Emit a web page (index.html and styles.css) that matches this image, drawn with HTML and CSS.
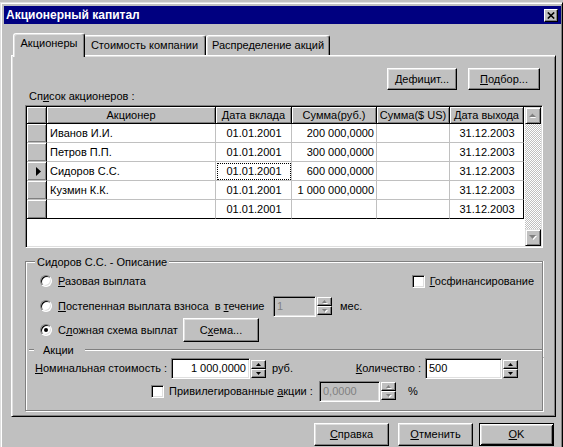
FILE: index.html
```html
<!DOCTYPE html>
<html lang="ru">
  <head>
    <meta charset="utf-8" />
    <title>Акционерный капитал</title>
    <link rel="stylesheet" href="styles.css">
  </head>

  <body>
    <div class="window">
      <div class="titlebar">
        <span class="title">Акционерный капитал</span>
        <span class="close-btn">
          <svg width="8" height="7" viewBox="0 0 8 7"><path d="M0.8 0.5L7.2 6.5M7.2 0.5L0.8 6.5" stroke="#000" stroke-width="1.6"/></svg>
        </span>
      </div>

      <div class="tabs">
        <div class="tab tab-1 active">Акционеры</div>
        <div class="tab tab-2">Стоимость компании</div>
        <div class="tab tab-3">Распределение акций</div>
      </div>

      <div class="tabpage">
        <div class="top-buttons">
          <button class="btn btn-deficit"><u>Д</u>ефицит...</button>
          <button class="btn btn-pick"><u>П</u>одбор...</button>
        </div>
        <div class="list-label">Сп<u>и</u>сок акционеров :</div>

        <!-- grid -->
        <div class="grid">
          <div class="grid-main">
            <table class="grid-table">
              <colgroup>
                <col class="c-ind"><col class="c-name"><col class="c-date"><col class="c-sum"><col class="c-usd"><col class="c-exit">
              </colgroup>
              <thead>
                <tr>
                  <th class="ind"></th>
                  <th>Акционер</th>
                  <th>Дата вклада</th>
                  <th>Сумма(руб.)</th>
                  <th>Сумма($ US)</th>
                  <th>Дата выхода</th>
                </tr>
              </thead>
              <tbody>
                <tr>
                  <td class="ind"></td>
                  <td>Иванов И.И.</td>
                  <td class="center">01.01.2001</td>
                  <td class="num">200 000,0000</td>
                  <td></td>
                  <td class="center">31.12.2003</td>
                </tr>
                <tr>
                  <td class="ind"></td>
                  <td>Петров П.П.</td>
                  <td class="center">01.01.2001</td>
                  <td class="num">300 000,0000</td>
                  <td></td>
                  <td class="center">31.12.2003</td>
                </tr>
                <tr>
                  <td class="ind current">
                    <svg width="5" height="9" viewBox="0 0 5 9"><path d="M0 0L5 4.5L0 9z" fill="#000"/></svg>
                  </td>
                  <td>Сидоров С.С.</td>
                  <td class="center focus">01.01.2001</td>
                  <td class="num">600 000,0000</td>
                  <td></td>
                  <td class="center">31.12.2003</td>
                </tr>
                <tr>
                  <td class="ind"></td>
                  <td>Кузмин К.К.</td>
                  <td class="center">01.01.2001</td>
                  <td class="num">1 000 000,0000</td>
                  <td></td>
                  <td class="center">31.12.2003</td>
                </tr>
                <tr>
                  <td class="ind"></td>
                  <td></td>
                  <td class="center">01.01.2001</td>
                  <td class="num"></td>
                  <td></td>
                  <td class="center">31.12.2003</td>
                </tr>
              </tbody>
            </table>
          </div>
          <div class="vscroll">
            <div class="sb-btn">
              <svg width="8" height="5" viewBox="0 0 8 5"><path d="M1 5L4 1L7 5z" fill="#fff"/><path d="M0 4L3.5 0.5L7 4z" fill="#808080"/></svg>
            </div>
            <div class="sb-track"></div>
            <div class="sb-btn">
              <svg width="8" height="5" viewBox="0 0 8 5"><path d="M1 1H8L4.5 5z" fill="#fff"/><path d="M0 0H7L3.5 4z" fill="#808080"/></svg>
            </div>
          </div>
        </div>

        <!-- description -->
        <div class="group desc">
          <div class="group-title"><span>Сидоров С.С. - Описание</span></div>
          <div class="group-body desc-body">
            <div class="opt-row row-1">
              <label class="radio-label"><span class="radio"></span><span><u>Р</u>азовая выплата</span></label>
              <label class="check-label gosfin"><span class="checkbox"></span><span><u>Г</u>осфинансирование</span></label>
            </div>
            <div class="opt-row row-2">
              <label class="radio-label term-label"><span class="radio"></span><span><u>П</u>остепенная выплата взноса&nbsp; в <u>т</u>ечение</span></label>
              <div class="spin w-term">
                <span class="field disabled">1</span>
                <span class="spinner disabled">
                  <span class="spin-btn"><svg width="5" height="3" viewBox="0 0 5 3"><path d="M2.5 0L5 3H0z"/></svg></span>
                  <span class="spin-btn"><svg width="5" height="3" viewBox="0 0 5 3"><path d="M0 0H5L2.5 3z"/></svg></span>
                </span>
              </div>
              <span class="unit unit-month">мес.</span>
            </div>
            <div class="opt-row row-3">
              <label class="radio-label scheme-label"><span class="radio checked"></span><span>С<u>л</u>ожная схема выплат</span></label>
              <button class="btn btn-scheme">С<u>х</u>ема...</button>
            </div>
          </div>
        </div>

        <!-- shares -->
        <div class="group shares">
          <div class="group-title"><span>Акции</span></div>
          <div class="group-body shares-body">
            <div class="share-row row-nominal">
              <label class="field-label nominal-label"><u>Н</u>оминальная стоимость :</label>
              <div class="spin w-nominal">
                <span class="field num">1 000,0000</span>
                <span class="spinner">
                  <span class="spin-btn"><svg width="5" height="3" viewBox="0 0 5 3"><path d="M2.5 0L5 3H0z"/></svg></span>
                  <span class="spin-btn"><svg width="5" height="3" viewBox="0 0 5 3"><path d="M0 0H5L2.5 3z"/></svg></span>
                </span>
              </div>
              <span class="unit unit-rub">руб.</span>
              <label class="field-label qty-label"><u>К</u>оличество :</label>
              <div class="spin w-qty">
                <span class="field">500</span>
                <span class="spinner">
                  <span class="spin-btn"><svg width="5" height="3" viewBox="0 0 5 3"><path d="M2.5 0L5 3H0z"/></svg></span>
                  <span class="spin-btn"><svg width="5" height="3" viewBox="0 0 5 3"><path d="M0 0H5L2.5 3z"/></svg></span>
                </span>
              </div>
            </div>
            <div class="share-row row-priv">
              <label class="check-label priv-label"><span class="checkbox"></span><span>Привилегированные <u>а</u>кции :</span></label>
              <div class="spin w-priv">
                <span class="field disabled">0,0000</span>
                <span class="spinner disabled">
                  <span class="spin-btn"><svg width="5" height="3" viewBox="0 0 5 3"><path d="M2.5 0L5 3H0z"/></svg></span>
                  <span class="spin-btn"><svg width="5" height="3" viewBox="0 0 5 3"><path d="M0 0H5L2.5 3z"/></svg></span>
                </span>
              </div>
              <span class="unit unit-pct">%</span>
            </div>
          </div>
        </div>
      </div>

      <div class="footer">
        <button class="btn btn-foot btn-help"><u>С</u>правка</button>
        <button class="btn btn-foot btn-cancel"><u>О</u>тменить</button>
        <button class="btn btn-foot btn-ok"><u>O</u>K</button>
      </div>
    </div>
  </body>
</html>
```

FILE: styles.css
```css
* {
  margin: 0;
  padding: 0;
  box-sizing: border-box;
}

html,
body {
  height: 100%;
  overflow: hidden;
}

body {
  background-color: #c0c0c0;
  font-family: 'Liberation Sans', Arial, sans-serif;
  font-size: 11px;
  line-height: 13px;
  color: #000;
}

u {
  text-decoration: underline;
  text-underline-offset: 1px;
}

/* window frame */
.window {
  width: 563px;
  height: 460px;
  margin-top: 2px;
  border: 1px solid;
  border-color: #dfdfdf #000 #000 #dfdfdf;
  box-shadow: inset 1px 1px #fff, inset -1px -1px #808080;
  padding: 3px 1px 0 3px;
}

.titlebar {
  display: flex;
  align-items: center;
  justify-content: space-between;
  height: 18px;
  padding: 0 3px 0 2px;
  background-color: #000080;
  color: #fff;
}

.titlebar .title {
  font-size: 12px;
  font-weight: 700;
}

.close-btn {
  display: flex;
  align-items: center;
  justify-content: center;
  width: 14px;
  height: 13px;
  background-color: #c0c0c0;
  border: 1px solid;
  border-color: #fff #000 #000 #fff;
  box-shadow: inset -1px -1px #808080;
}

/* tabs */
.tabs {
  display: flex;
  align-items: flex-end;
  height: 22px;
  margin-top: 9px;
  padding-left: 11px;
}

.tab {
  display: flex;
  align-items: center;
  justify-content: center;
  height: 20px;
  padding-bottom: 1px;
  border: 1px solid;
  border-bottom: none;
  border-color: #fff #000 transparent #fff;
  border-radius: 3px 3px 0 0;
  box-shadow: inset -1px 0 #808080, inset 1px 1px #dfdfdf;
  white-space: nowrap;
}

.tab-1 {
  width: 72px;
}
.tab-2 {
  width: 123px;
}
.tab-3 {
  width: 124px;
}

.tab.active {
  position: relative;
  z-index: 1;
  height: 24px;
  margin: 0 -2px -2px;
  padding-bottom: 4px;
  background-color: #c0c0c0;
}

/* tab page */
.tabpage {
  height: 362px;
  margin: 0 5px 0 7px;
  padding: 12px 12px 0 13px;
  border: 1px solid;
  border-color: #fff #000 #000 #fff;
  box-shadow: inset 1px 1px #dfdfdf, inset -1px -1px #808080;
}

.top-buttons {
  display: flex;
  justify-content: flex-end;
  gap: 11px;
  height: 22px;
  margin-right: 3px;
}

.btn {
  display: flex;
  align-items: center;
  justify-content: center;
  height: 22px;
  font: inherit;
  color: #000;
  background-color: #c0c0c0;
  border: 1px solid;
  border-color: #fff #000 #000 #fff;
  box-shadow: inset -1px -1px #808080, inset 1px 1px #dfdfdf;
}

.btn-deficit {
  width: 70px;
}
.btn-pick {
  width: 72px;
}

.list-label {
  height: 13px;
  padding-left: 4px;
}

/* grid */
.grid {
  display: flex;
  height: 143px;
  margin-top: 2px;
  padding: 1px;
  border: 1px solid;
  border-color: #808080 #fff #fff #808080;
  box-shadow: inset 1px 1px #000, inset -1px -1px #dfdfdf;
}

.grid-main {
  flex: 1;
  background-color: #fff;
}

.grid-table {
  width: 497px;
  table-layout: fixed;
  border-collapse: separate;
  border-spacing: 0;
}

.c-ind {
  width: 20px;
}
.c-name {
  width: 169px;
}
.c-date {
  width: 76px;
}
.c-sum {
  width: 85px;
}
.c-usd {
  width: 73px;
}
.c-exit {
  width: 74px;
}

.grid-table thead tr {
  height: 17px;
}

.grid-table tbody tr {
  height: 19px;
}

.grid-table th {
  font-weight: 400;
  text-align: center;
  padding: 0 2px;
  background-color: #c0c0c0;
  border-right: 1px solid #000;
  border-bottom: 1px solid #000;
  box-shadow: inset 1px 1px #fff, inset -1px -1px #808080;
  white-space: nowrap;
  overflow: hidden;
}

.grid-table td {
  padding: 0 2px 0 3px;
  border-right: 1px solid #c0c0c0;
  border-bottom: 1px solid #c0c0c0;
  white-space: nowrap;
  overflow: hidden;
}

.grid-table td:last-child {
  border-right-color: #000;
}

.grid-table tbody tr:last-child td {
  border-bottom-color: #000;
}

.grid-table td.ind {
  padding: 0 0 0 9px;
  line-height: 0;
  background-color: #c0c0c0;
  border-right-color: #000;
  box-shadow: inset 1px 1px #fff, inset -1px -1px #808080;
}

.grid-table td.center {
  text-align: center;
}

.grid-table td.num {
  text-align: right;
}

.grid-table td.focus {
  outline: 1px dotted #000;
  outline-offset: -2px;
}

.vscroll {
  display: flex;
  flex-direction: column;
  width: 16px;
  margin-left: auto;
}

.sb-btn {
  display: flex;
  align-items: center;
  justify-content: center;
  height: 17px;
  background-color: #c0c0c0;
  border: 1px solid;
  border-color: #dfdfdf #000 #000 #dfdfdf;
  box-shadow: inset 1px 1px #fff, inset -1px -1px #808080;
}

.sb-track {
  flex: 1;
  background: repeating-conic-gradient(#fff 0 25%, #c0c0c0 0 50%) 0 0 / 2px 2px;
}

/* group boxes */
.group-title {
  display: flex;
  align-items: flex-end;
  height: 13px;
}

.group-title::before {
  content: '';
  width: 9px;
  height: 7px;
  border-top: 1px solid #808080;
  border-left: 1px solid #808080;
  box-shadow: inset 1px 1px #fff;
}

.group-title::after {
  content: '';
  flex: 1;
  height: 7px;
  border-top: 1px solid #808080;
  border-right: 1px solid #808080;
  box-shadow: inset 0 1px #fff, 1px 0 #fff;
}

.group-title span {
  align-self: center;
  padding: 0 2px;
  white-space: nowrap;
}

.group-body {
  border: 1px solid #808080;
  border-top: none;
  box-shadow: inset 1px 0 #fff, 1px 1px #fff;
}

.desc {
  margin-top: 8px;
}

.desc-body {
  height: 82px;
  padding: 5px 8px 0 14px;
  border-bottom: none;
  box-shadow: inset 1px 0 #fff, 1px 0 #fff;
}

.shares {
  position: relative;
  margin-top: -7px;
}

.shares .group-title {
  border-left: 1px solid #808080;
  border-right: 1px solid #808080;
  box-shadow: inset 1px 0 #fff, 1px 0 #fff;
}

.shares .group-title::before {
  width: 5px;
  margin-left: 3px;
  border-left: none;
  box-shadow: inset 0 1px #fff;
}

.shares .group-title::after {
  border-right: none;
  box-shadow: inset 0 1px #fff;
}

.shares .group-title span {
  padding: 0 11px 0 9px;
}

.shares-body {
  height: 54px;
  padding: 1px 0 0 9px;
}

/* options */
.opt-row {
  display: flex;
  align-items: center;
}

.row-1 {
  height: 14px;
}

.row-2 {
  height: 22px;
  margin-top: 7px;
}

.row-3 {
  height: 24px;
  margin-top: 1px;
}

.radio-label,
.check-label {
  display: flex;
  align-items: center;
  white-space: nowrap;
}

.radio {
  display: flex;
  align-items: center;
  justify-content: center;
  width: 12px;
  height: 12px;
  margin-right: 6px;
  border-radius: 50%;
  background-color: #fff;
  border: 1px solid;
  border-color: #808080 #fff #fff #808080;
  box-shadow: inset 1px 1px #000, inset -1px -1px #dfdfdf;
}

.radio.checked::after {
  content: '';
  width: 4px;
  height: 4px;
  border-radius: 50%;
  background-color: #000;
}

.checkbox {
  width: 13px;
  height: 13px;
  margin-right: 5px;
  background-color: #fff;
  border: 1px solid;
  border-color: #808080 #fff #fff #808080;
  box-shadow: inset 1px 1px #000, inset -1px -1px #dfdfdf;
}

.gosfin {
  margin-left: auto;
}

.term-label {
  width: 233px;
}

.scheme-label {
  width: 143px;
}

.btn-scheme {
  width: 76px;
  height: 24px;
}

/* spin fields */
.spin {
  display: flex;
  align-items: center;
  height: 21px;
}

.field {
  display: flex;
  align-items: center;
  flex: 1;
  height: 21px;
  padding: 0 3px;
  background-color: #fff;
  border: 1px solid;
  border-color: #808080 #fff #fff #808080;
  box-shadow: inset 1px 1px #000, inset -1px -1px #dfdfdf;
  white-space: nowrap;
}

.field.num {
  justify-content: flex-end;
}

.field.disabled {
  background-color: #c0c0c0;
  color: #808080;
}

.spinner {
  display: flex;
  flex-direction: column;
  width: 15px;
  height: 18px;
  margin-left: 1px;
}

.spin-btn {
  display: flex;
  align-items: center;
  justify-content: center;
  flex: 1;
  background-color: #c0c0c0;
  border: 1px solid;
  border-color: #fff #000 #000 #fff;
  box-shadow: inset -1px -1px #808080;
}

.spin-btn svg {
  fill: #000;
}

.spinner.disabled .spin-btn svg {
  fill: #808080;
  filter: drop-shadow(1px 1px 0 #fff);
}

.w-term {
  width: 59px;
}
.w-nominal {
  width: 95px;
}
.w-qty {
  width: 93px;
}
.w-priv {
  width: 77px;
}

.unit-month {
  margin-left: 8px;
}

/* shares rows */
.share-row {
  display: flex;
  align-items: center;
  height: 21px;
}

.row-priv {
  height: 22px;
  margin-top: 1px;
}

.field-label {
  white-space: nowrap;
}

.nominal-label {
  width: 136px;
}

.unit-rub {
  width: 40px;
  margin-left: 6px;
}

.qty-label {
  width: 113px;
  padding-right: 4px;
  text-align: right;
}

.priv-label {
  width: 168px;
  margin-left: 116px;
}

.unit-pct {
  margin-left: 12px;
}

/* footer */
.footer {
  display: flex;
  justify-content: flex-end;
  margin-top: 6px;
  padding-right: 7px;
}

.btn-foot {
  width: 75px;
  height: 23px;
}

.btn-cancel {
  margin-left: 9px;
}

.btn-ok {
  margin-left: 6px;
  border: 1px solid #000;
  box-shadow: inset 1px 1px #fff, inset -1px -1px #000, inset 2px 2px #dfdfdf,
    inset -2px -2px #808080;
}
```
